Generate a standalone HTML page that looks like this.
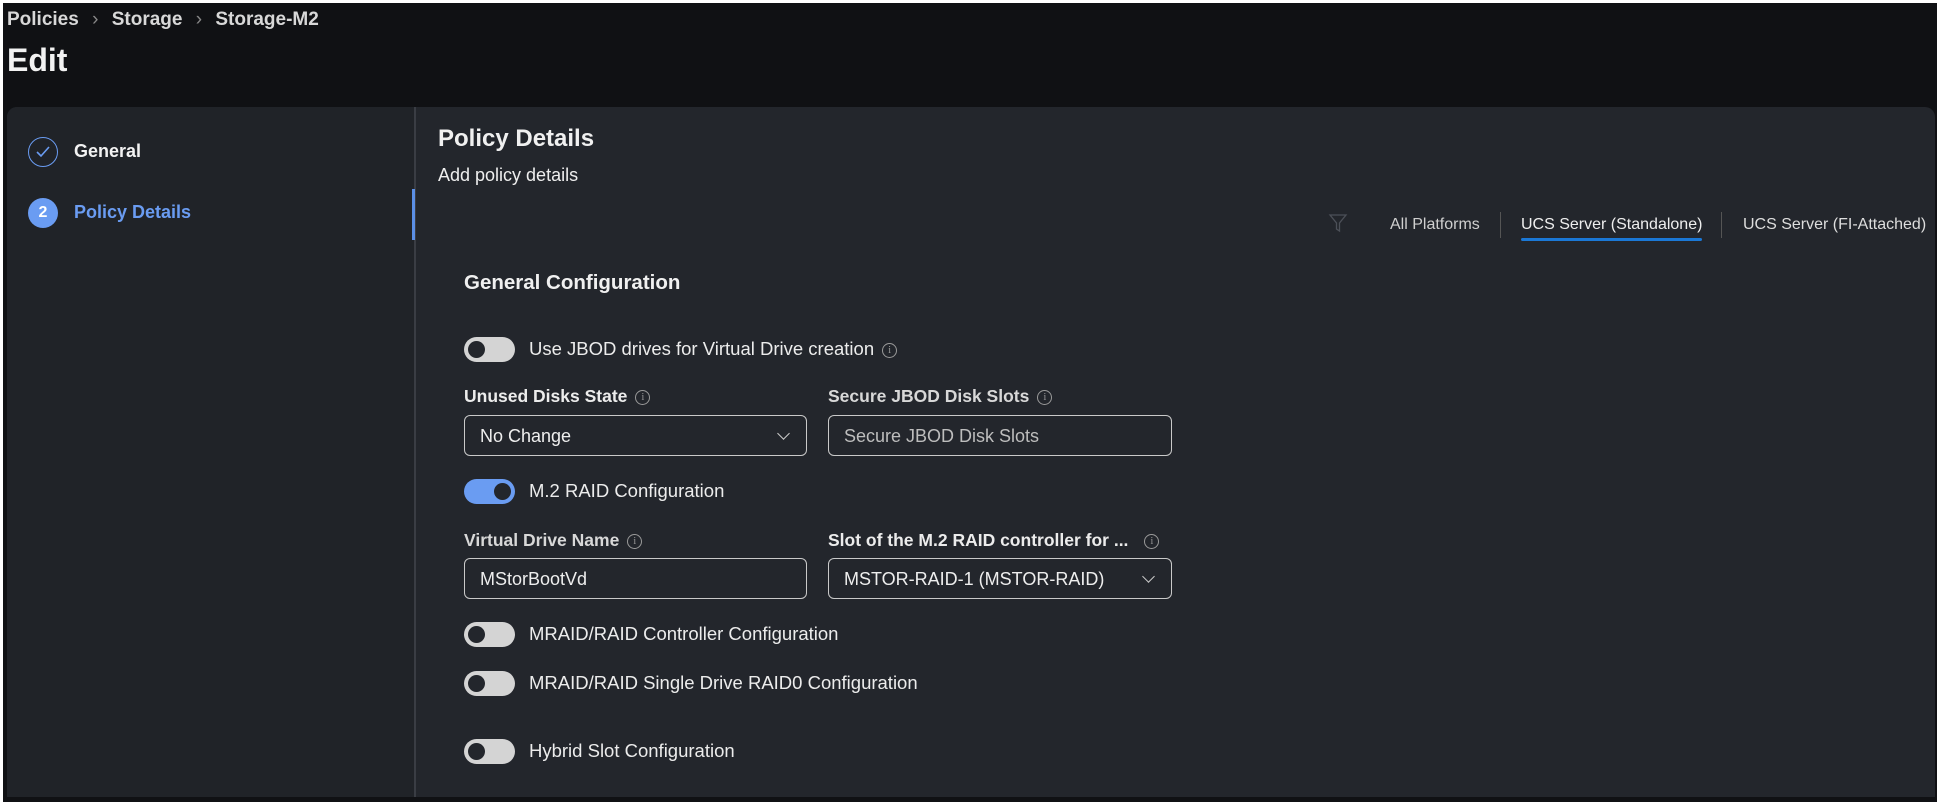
<!DOCTYPE html>
<html><head><meta charset="utf-8"><style>
*{box-sizing:border-box;margin:0;padding:0}
body{width:1941px;height:802px;background:#101114;font-family:"Liberation Sans",sans-serif;color:#ececec;position:relative;overflow:hidden}
.a{position:absolute;white-space:nowrap}
.panel{position:absolute;left:7px;top:107px;width:1928px;height:690px;background:#23262c;border-radius:10px 10px 0 0}
.side{position:absolute;left:7px;top:107px;width:409px;height:690px;background:#202328;border-radius:10px 0 0 0;border-right:2px solid #3a3d44}
.tog{position:absolute;width:51px;height:25px;border-radius:13px;background:#d4d4d4}
.tog::after{content:"";position:absolute;left:4px;top:4px;width:17px;height:17px;border-radius:50%;background:#23262c}
.tog.on{background:#6a9cf2}
.tog.on::after{left:30px}
.lbl{font-size:18.5px;color:#ececec}
.flab{font-size:17.5px;font-weight:bold}
.box{position:absolute;height:41px;border:1.5px solid #c9c9c9;border-radius:6px;font-size:18px;padding:10px 15px;color:#eee}
.info{display:inline-block;width:15px;height:15px;border:1.3px solid #9a9a9a;border-radius:50%;font-size:10px;line-height:13px;text-align:center;color:#9a9a9a;vertical-align:middle;margin-left:8px;font-weight:normal;font-family:"Liberation Serif",serif}
.chev{position:absolute;right:18px;top:13px;width:9px;height:9px;border-right:1.5px solid #ccc;border-bottom:1.5px solid #ccc;transform:rotate(45deg)}
</style></head><body>
<div class="a" style="left:0;top:0;width:1941px;height:3px;background:#fff"></div>
<div class="a" style="left:0;top:0;width:3px;height:802px;background:#fff"></div>
<div class="a" style="left:7px;top:9px;font-size:19px;font-weight:bold;color:#d8d8d8">Policies <span style="color:#888;margin:0 8px;font-weight:normal">›</span> Storage <span style="color:#888;margin:0 8px;font-weight:normal">›</span> Storage-M2</div>
<div class="a" style="left:7px;top:42px;font-size:32px;font-weight:bold;color:#f2f2f2">Edit</div>
<div class="panel"></div>
<div class="side"></div>
<div class="a" style="left:412px;top:189px;width:3px;height:51px;background:#5b8fe6"></div>
<div class="a" style="left:28px;top:137px;width:30px;height:30px;border:1.8px solid #6a9cf2;border-radius:50%"></div>
<svg class="a" style="left:35px;top:145px" width="16" height="14"><path d="M2 7 L6 11 L14 2" stroke="#6a9cf2" stroke-width="1.6" fill="none"/></svg>
<div class="a" style="left:74px;top:141px;font-size:18px;font-weight:bold;color:#f2f2f2">General</div>
<div class="a" style="left:28px;top:198px;width:30px;height:30px;background:#6a9cf2;border-radius:50%;text-align:center;line-height:30px;font-size:16px;font-weight:bold;color:#fff">2</div>
<div class="a" style="left:74px;top:202px;font-size:18px;font-weight:bold;color:#6a9cf2">Policy Details</div>
<div class="a" style="left:438px;top:125px;font-size:24px;font-weight:bold;color:#f0f0f0">Policy Details</div>
<div class="a" style="left:438px;top:165px;font-size:18px;color:#eee">Add policy details</div>
<svg class="a" style="left:1328px;top:213px" width="20" height="20"><path d="M2 2 H18 L11.5 10 V18 L8.5 16 V10 Z" stroke="#4c5058" stroke-width="1.3" fill="none"/></svg>
<div class="a" style="left:1390px;top:216px;font-size:16px;color:#cfcfcf">All Platforms</div>
<div class="a" style="left:1500px;top:212px;width:1px;height:26px;background:#555"></div>
<div class="a" style="left:1521px;top:216px;font-size:16px;color:#eee">UCS Server (Standalone)</div>
<div class="a" style="left:1521px;top:238px;width:181px;height:3px;background:#1b78d6;border-radius:2px"></div>
<div class="a" style="left:1721px;top:212px;width:1px;height:26px;background:#555"></div>
<div class="a" style="left:1743px;top:216px;font-size:16px;color:#ddd">UCS Server (FI-Attached)</div>
<div class="a" style="left:464px;top:271px;font-size:20.5px;font-weight:bold;color:#f0f0f0">General Configuration</div>
<div class="tog" style="left:464px;top:337px"></div>
<div class="a lbl" style="left:529px;top:338px">Use JBOD drives for Virtual Drive creation<span class="info">i</span></div>
<div class="a flab" style="left:464px;top:386px">Unused Disks State<span class="info">i</span></div>
<div class="a flab" style="left:828px;top:386px;color:#d8d8d8">Secure JBOD Disk Slots<span class="info">i</span></div>
<div class="box" style="left:464px;top:415px;width:343px">No Change<div class="chev"></div></div>
<div class="box" style="left:828px;top:415px;width:344px;color:#bdbdbd">Secure JBOD Disk Slots</div>
<div class="tog on" style="left:464px;top:479px"></div>
<div class="a lbl" style="left:529px;top:480px">M.2 RAID Configuration</div>
<div class="a flab" style="left:464px;top:530px;color:#d8d8d8">Virtual Drive Name<span class="info">i</span></div>
<div class="a flab" style="left:828px;top:530px">Slot of the M.2 RAID controller for ...<span class="info" style="margin-left:16px">i</span></div>
<div class="box" style="left:464px;top:558px;width:343px">MStorBootVd</div>
<div class="box" style="left:828px;top:558px;width:344px">MSTOR-RAID-1 (MSTOR-RAID)<div class="chev"></div></div>
<div class="tog" style="left:464px;top:622px"></div>
<div class="a lbl" style="left:529px;top:623px">MRAID/RAID Controller Configuration</div>
<div class="tog" style="left:464px;top:671px"></div>
<div class="a lbl" style="left:529px;top:672px">MRAID/RAID Single Drive RAID0 Configuration</div>
<div class="tog" style="left:464px;top:739px"></div>
<div class="a lbl" style="left:529px;top:740px">Hybrid Slot Configuration</div>
<div class="a" style="left:1937px;top:0;width:4px;height:802px;background:#fff"></div>
</body></html>
